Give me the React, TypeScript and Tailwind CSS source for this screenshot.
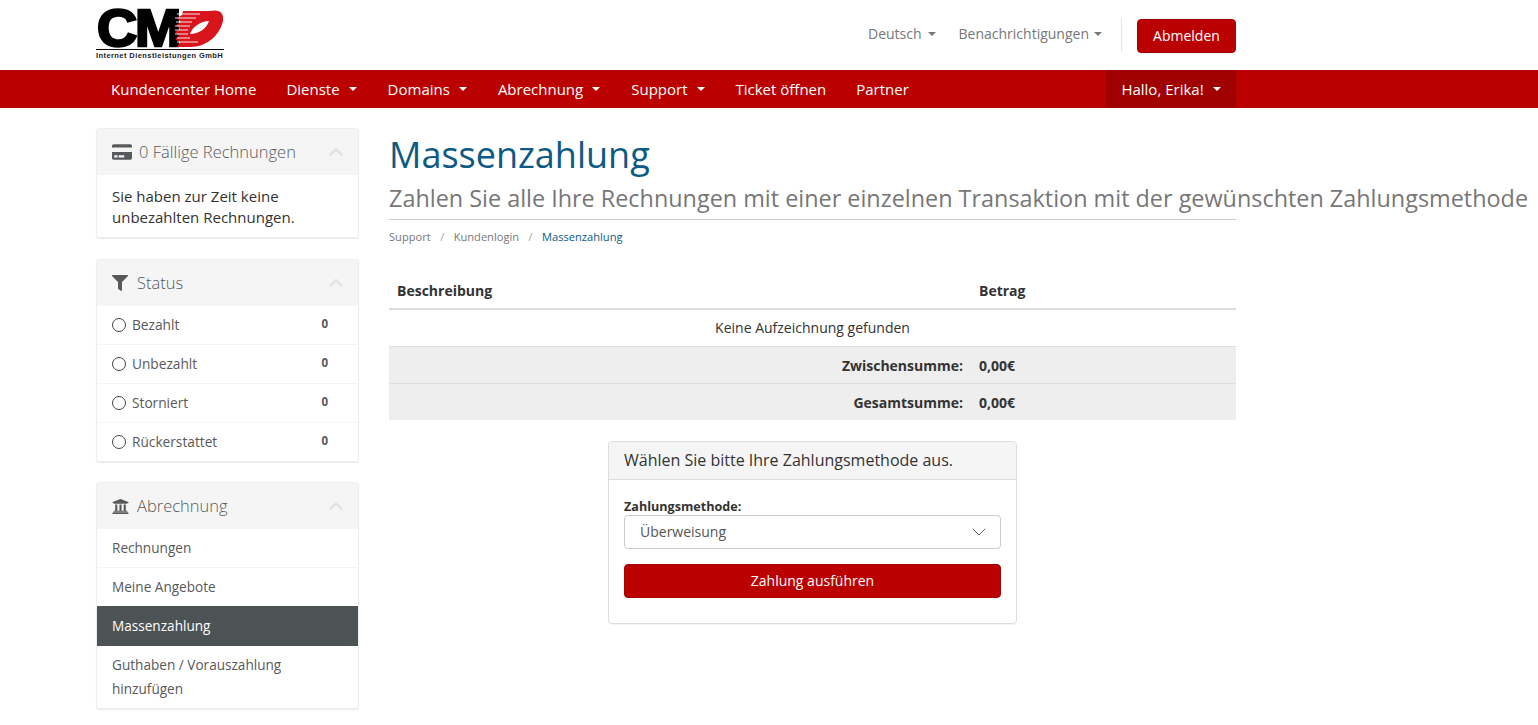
import { ChevronDown, ChevronUp } from "lucide-react";
import { FaCreditCard, FaFilter, FaUniversity } from "react-icons/fa";

const navItems = [
  { label: "Dienste", caret: true },
  { label: "Domains", caret: true },
  { label: "Abrechnung", caret: true },
  { label: "Support", caret: true },
  { label: "Ticket öffnen", caret: false },
  { label: "Partner", caret: false },
];

const statusItems = ["Bezahlt", "Unbezahlt", "Storniert", "Rückerstattet"];

function Caret({ className }: { className: string }) {
  return <span className={`inline-block h-0 w-0 border-x-[4px] border-t-[4px] border-x-transparent ${className}`} />;
}

function Logo() {
  return (
    <div className="flex w-[128px] flex-col">
      <div className="relative h-[39px]">
        <span className="absolute left-[1px] top-0 origin-left scale-x-[1.07] font-['Liberation_Sans',sans-serif] text-[52px] font-bold leading-[38px] tracking-[-2px] text-black [-webkit-text-stroke:2.5px_black]">
          CM
        </span>
        <svg className="absolute left-[78px] top-0" width="50" height="38" viewBox="0 0 50 38">
          <path d="M9 2 H36 C46 0 50 4 49 12 C46 25 34 38 16 38 H3 L6 33 L1 30 L5 27 L1 23 L6 20 L2 16 L7 13 L3 9 L8 6 Z" fill="#d8141c" />
          <path d="M16 25 C18 18 27 12 35 12 C33 19 25 25 16 25 Z" fill="#fff" />
          <path d="M3 5 H26 M1 9 H22 M2 13 H18 M1 17 H16 M1 21 H14 M1 25 H14 M3 29 H16 M3 33 H24" stroke="#fff" strokeWidth="0.9" />
        </svg>
      </div>
      <div className="mt-[1px] border-t border-black pt-[2px] font-['Liberation_Sans',sans-serif] text-[7.5px] font-bold leading-[8px] tracking-[0.42px] text-[#222] whitespace-nowrap">
        Internet Dienstleistungen GmbH
      </div>
    </div>
  );
}

function PanelHead({ icon, title, gap }: { icon: React.ReactNode; title: string; gap: string }) {
  return (
    <div className="flex h-[46px] items-center bg-[#f5f5f5] pl-[15px] pr-[11px]">
      <span className="flex w-[20px] justify-start text-[#58595b]">{icon}</span>
      <span className={`text-[16.5px] font-light text-[#58595b] ${gap}`}>{title}</span>
      <ChevronUp className="ml-auto h-[22px] w-[22px] text-[#e4e4e4]" strokeWidth={3} />
    </div>
  );
}

export default function App() {
  return (
    <div className="min-h-[725px] overflow-hidden bg-white font-['Open_Sans',sans-serif] text-[14px] text-[#333]">
      <header className="ml-[96px] flex h-[70px] w-[1140px] items-center justify-between">
        <div className="-mt-[1px]">
          <Logo />
        </div>
        <div className="flex items-center text-[#777]">
          <button className="-mt-[3px] flex items-center gap-[6px]">
            Deutsch <Caret className="border-t-[#777]" />
          </button>
          <button className="-mt-[3px] ml-[23px] flex items-center gap-[5px]">
            Benachrichtigungen <Caret className="border-t-[#777]" />
          </button>
          <div className="ml-[19px] mr-[15px] h-[34px] border-l border-[#e5e5e5]" />
          <button className="mt-[2px] h-[34px] w-[99px] rounded-[4px] border border-[#a80000] bg-[#bb0000] pb-[2px] text-white">
            Abmelden
          </button>
        </div>
      </header>

      <nav className="h-[38px] bg-[#bb0000]">
        <div className="ml-[96px] flex h-full w-[1140px] items-center justify-between text-[15px] text-white">
          <div className="flex h-full items-center">
            <a className="px-[15px]">Kundencenter Home</a>
            {navItems.map((item) => (
              <a key={item.label} className="flex items-center gap-[9px] pl-[15px] pr-[15px] has-[span]:pr-[16px]">
                {item.label}
                {item.caret && <Caret className="border-t-white" />}
              </a>
            ))}
          </div>
          <a className="flex h-full w-[130px] items-center justify-center gap-[9px] bg-[#a00000]">
            Hallo, Erika! <Caret className="border-t-white" />
          </a>
        </div>
      </nav>

      <div className="ml-[96px] flex w-[1140px] items-start">
        <aside className="mt-[20px] flex w-[263px] shrink-0 flex-col gap-[21px]">
          <section className="overflow-hidden rounded-[3px] border border-[#eee] bg-white shadow-[0_1px_1px_rgba(0,0,0,0.08)]">
            <PanelHead icon={<FaCreditCard size={20} />} title="0 Fällige Rechnungen" gap="ml-[7px]" />
            <p className="px-[15px] pb-[9px] pt-[11px] text-[15px] leading-[21px]">
              Sie haben zur Zeit keine
              <br />
              unbezahlten Rechnungen.
            </p>
          </section>

          <section className="overflow-hidden rounded-[3px] border border-[#eee] bg-white shadow-[0_1px_1px_rgba(0,0,0,0.08)]">
            <PanelHead icon={<FaFilter size={16} />} title="Status" gap="ml-[5px]" />
            {statusItems.map((s) => (
              <div key={s} className="flex h-[39px] items-center border-b border-[#f4f4f4] pl-[15px] pr-[30px] text-[13.7px] text-[#58595b] last:h-[38px] last:border-b-0">
                <span className="h-[14px] w-[14px] rounded-full border-[1.5px] border-[#444]" />
                <span className="ml-[6px]">{s}</span>
                <span className="mb-[3px] ml-auto text-[11.5px] font-bold">0</span>
              </div>
            ))}
          </section>

          <section className="-mt-[1px] overflow-hidden rounded-[3px] border border-[#eee] bg-white text-[13.6px] shadow-[0_1px_1px_rgba(0,0,0,0.08)]">
            <PanelHead icon={<FaUniversity size={17} />} title="Abrechnung" gap="ml-[5px]" />
            <a className="block h-[39px] border-b border-[#f4f4f4] px-[15px] leading-[38px] text-[#58595b]">Rechnungen</a>
            <a className="block h-[38px] px-[15px] leading-[38px] text-[#58595b]">Meine Angebote</a>
            <a className="block h-[40px] bg-[#4d5254] px-[15px] leading-[40px] text-white">Massenzahlung</a>
            <a className="block px-[15px] pb-[7px] pt-[7px] leading-[24px] text-[#58595b]">
              Guthaben / Vorauszahlung
              <br />
              hinzufügen
            </a>
          </section>
        </aside>

        <main className="ml-[30px] w-[847px] shrink-0">
          <h1 className="mt-[25px] text-[36px] leading-[44px] text-[#0d5a84]">Massenzahlung</h1>
          <div className="mt-[5px] whitespace-nowrap border-b border-[#ccc] pb-[5px] text-[23.4px] leading-[32px] text-[#777]">
            Zahlen Sie alle Ihre Rechnungen mit einer einzelnen Transaktion mit der gewünschten Zahlungsmethode
          </div>
          <div className="mt-[8px] flex items-center text-[11.1px] leading-[18px] text-[#777]">
            <span>Support</span>
            <span className="mx-[9.5px] text-[#aaa]">/</span>
            <span>Kundenlogin</span>
            <span className="mx-[9.5px] text-[#aaa]">/</span>
            <span className="text-[#0d5a84]">Massenzahlung</span>
          </div>

          <table className="mt-[25px] w-full border-collapse">
            <thead>
              <tr className="h-[38px] border-b-2 border-[#ddd] font-bold">
                <th className="px-[8px] pt-[2px] text-left">Beschreibung</th>
                <th className="w-[265px] px-[8px] pt-[2px] text-left">Betrag</th>
              </tr>
            </thead>
            <tbody>
              <tr className="h-[37px] border-b border-[#ddd]">
                <td colSpan={2} className="text-center">Keine Aufzeichnung gefunden</td>
              </tr>
              <tr className="h-[37px] border-b border-[#ddd] bg-[#eeeeee] font-bold">
                <td className="px-[8px] pt-[2px] text-right">Zwischensumme:</td>
                <td className="px-[8px] pt-[2px]">0,00€</td>
              </tr>
              <tr className="h-[37px] bg-[#eeeeee] font-bold">
                <td className="px-[8px] pt-[2px] text-right">Gesamtsumme:</td>
                <td className="px-[8px] pt-[2px]">0,00€</td>
              </tr>
            </tbody>
          </table>

          <section className="mx-auto mt-[21px] w-[409px] rounded-[4px] border border-[#ddd] shadow-[0_1px_1px_rgba(0,0,0,0.05)]">
            <div className="flex h-[38px] items-center rounded-t-[4px] border-b border-[#ddd] bg-[#f5f5f5] px-[15px] pb-[2px] text-[16px]">
              Wählen Sie bitte Ihre Zahlungsmethode aus.
            </div>
            <div className="px-[15px] pb-[25px] pt-[18px]">
              <div className="-mb-[1px] text-[12.6px] font-bold leading-[18px]">Zahlungsmethode:</div>
              <div className="flex h-[34px] items-center justify-between rounded-[4px] border border-[#ccc] pb-[1px] pl-[15px] pr-[9px] text-[#555]">
                Überweisung
                <ChevronDown className="h-[24px] w-[24px] text-[#666]" strokeWidth={1} />
              </div>
              <button className="mt-[15px] h-[34px] w-full rounded-[4px] border border-[#a80000] bg-[#bb0000] pb-[2px] text-white">
                Zahlung ausführen
              </button>
            </div>
          </section>
        </main>
      </div>
    </div>
  );
}
